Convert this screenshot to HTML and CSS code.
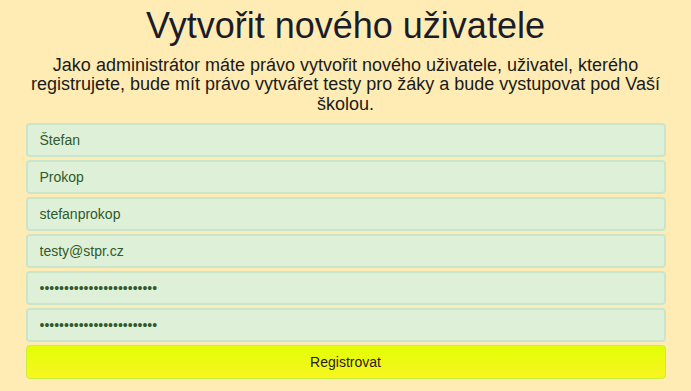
FILE: index.html
```html
<!DOCTYPE html>
<html lang="cs">
<head>
<meta charset="utf-8">
<title>Vytvořit nového uživatele</title>
<link rel="stylesheet" href="styles.css">
</head>
<body>
<div class="container">
  <h1 class="title">Vytvořit nového uživatele</h1>
  <h4 class="lead">Jako administrátor máte právo vytvořit nového uživatele, uživatel, kterého registrujete, bude mít právo vytvářet testy pro žáky a bude vystupovat pod Vaší školou.</h4>
  <form class="form">
    <input class="field" type="text" value="Štefan">
    <input class="field" type="text" value="Prokop">
    <input class="field" type="text" value="stefanprokop">
    <input class="field" type="text" value="testy@stpr.cz">
    <input class="field" type="password" value="aaaaaaaaaaaaaaaaaaaaaaaa">
    <input class="field" type="password" value="aaaaaaaaaaaaaaaaaaaaaaaa">
    <button class="submit" type="button">Registrovat</button>
  </form>
</div>
</body>
</html>
```
FILE: styles.css
```css
html, body {
  margin: 0;
  padding: 0;
}
body {
  background: #ffecb5;
  font-family: "Liberation Sans", Arial, sans-serif;
  color: #1c1c24;
}
.container {
  width: 640px;
  margin: 0 auto;
  padding-top: 6px;
}
.title {
  margin: 0;
  font-size: 36px;
  font-weight: normal;
  line-height: 1.1;
  text-align: center;
  color: #1a1c2a;
}
.lead {
  margin: 10px 0 0;
  font-size: 18px;
  font-weight: normal;
  line-height: 1.1;
  text-align: center;
  color: #1a1a1a;
}
.form {
  margin-top: 8px;
  display: flex;
  flex-direction: column;
  gap: 3px;
}
.field {
  box-sizing: border-box;
  display: block;
  width: 100%;
  height: 34px;
  margin: 0;
  padding: 6px 12px;
  font-family: "Liberation Sans", Arial, sans-serif;
  font-size: 14px;
  color: #2f5a2b;
  background: #dff0d8;
  border: 2px solid #c9e6cc;
  border-radius: 4px;
  outline: none;
}
.submit {
  box-sizing: border-box;
  display: block;
  width: 100%;
  height: 34px;
  margin: 0;
  padding: 6px 12px;
  font-family: "Liberation Sans", Arial, sans-serif;
  font-size: 14px;
  color: #2a1a1a;
  background: linear-gradient(to bottom, #e2ff05 0%, #f9f520 100%);
  border: 1px solid #c6ee3a;
  border-radius: 4px;
  cursor: pointer;
}
```
